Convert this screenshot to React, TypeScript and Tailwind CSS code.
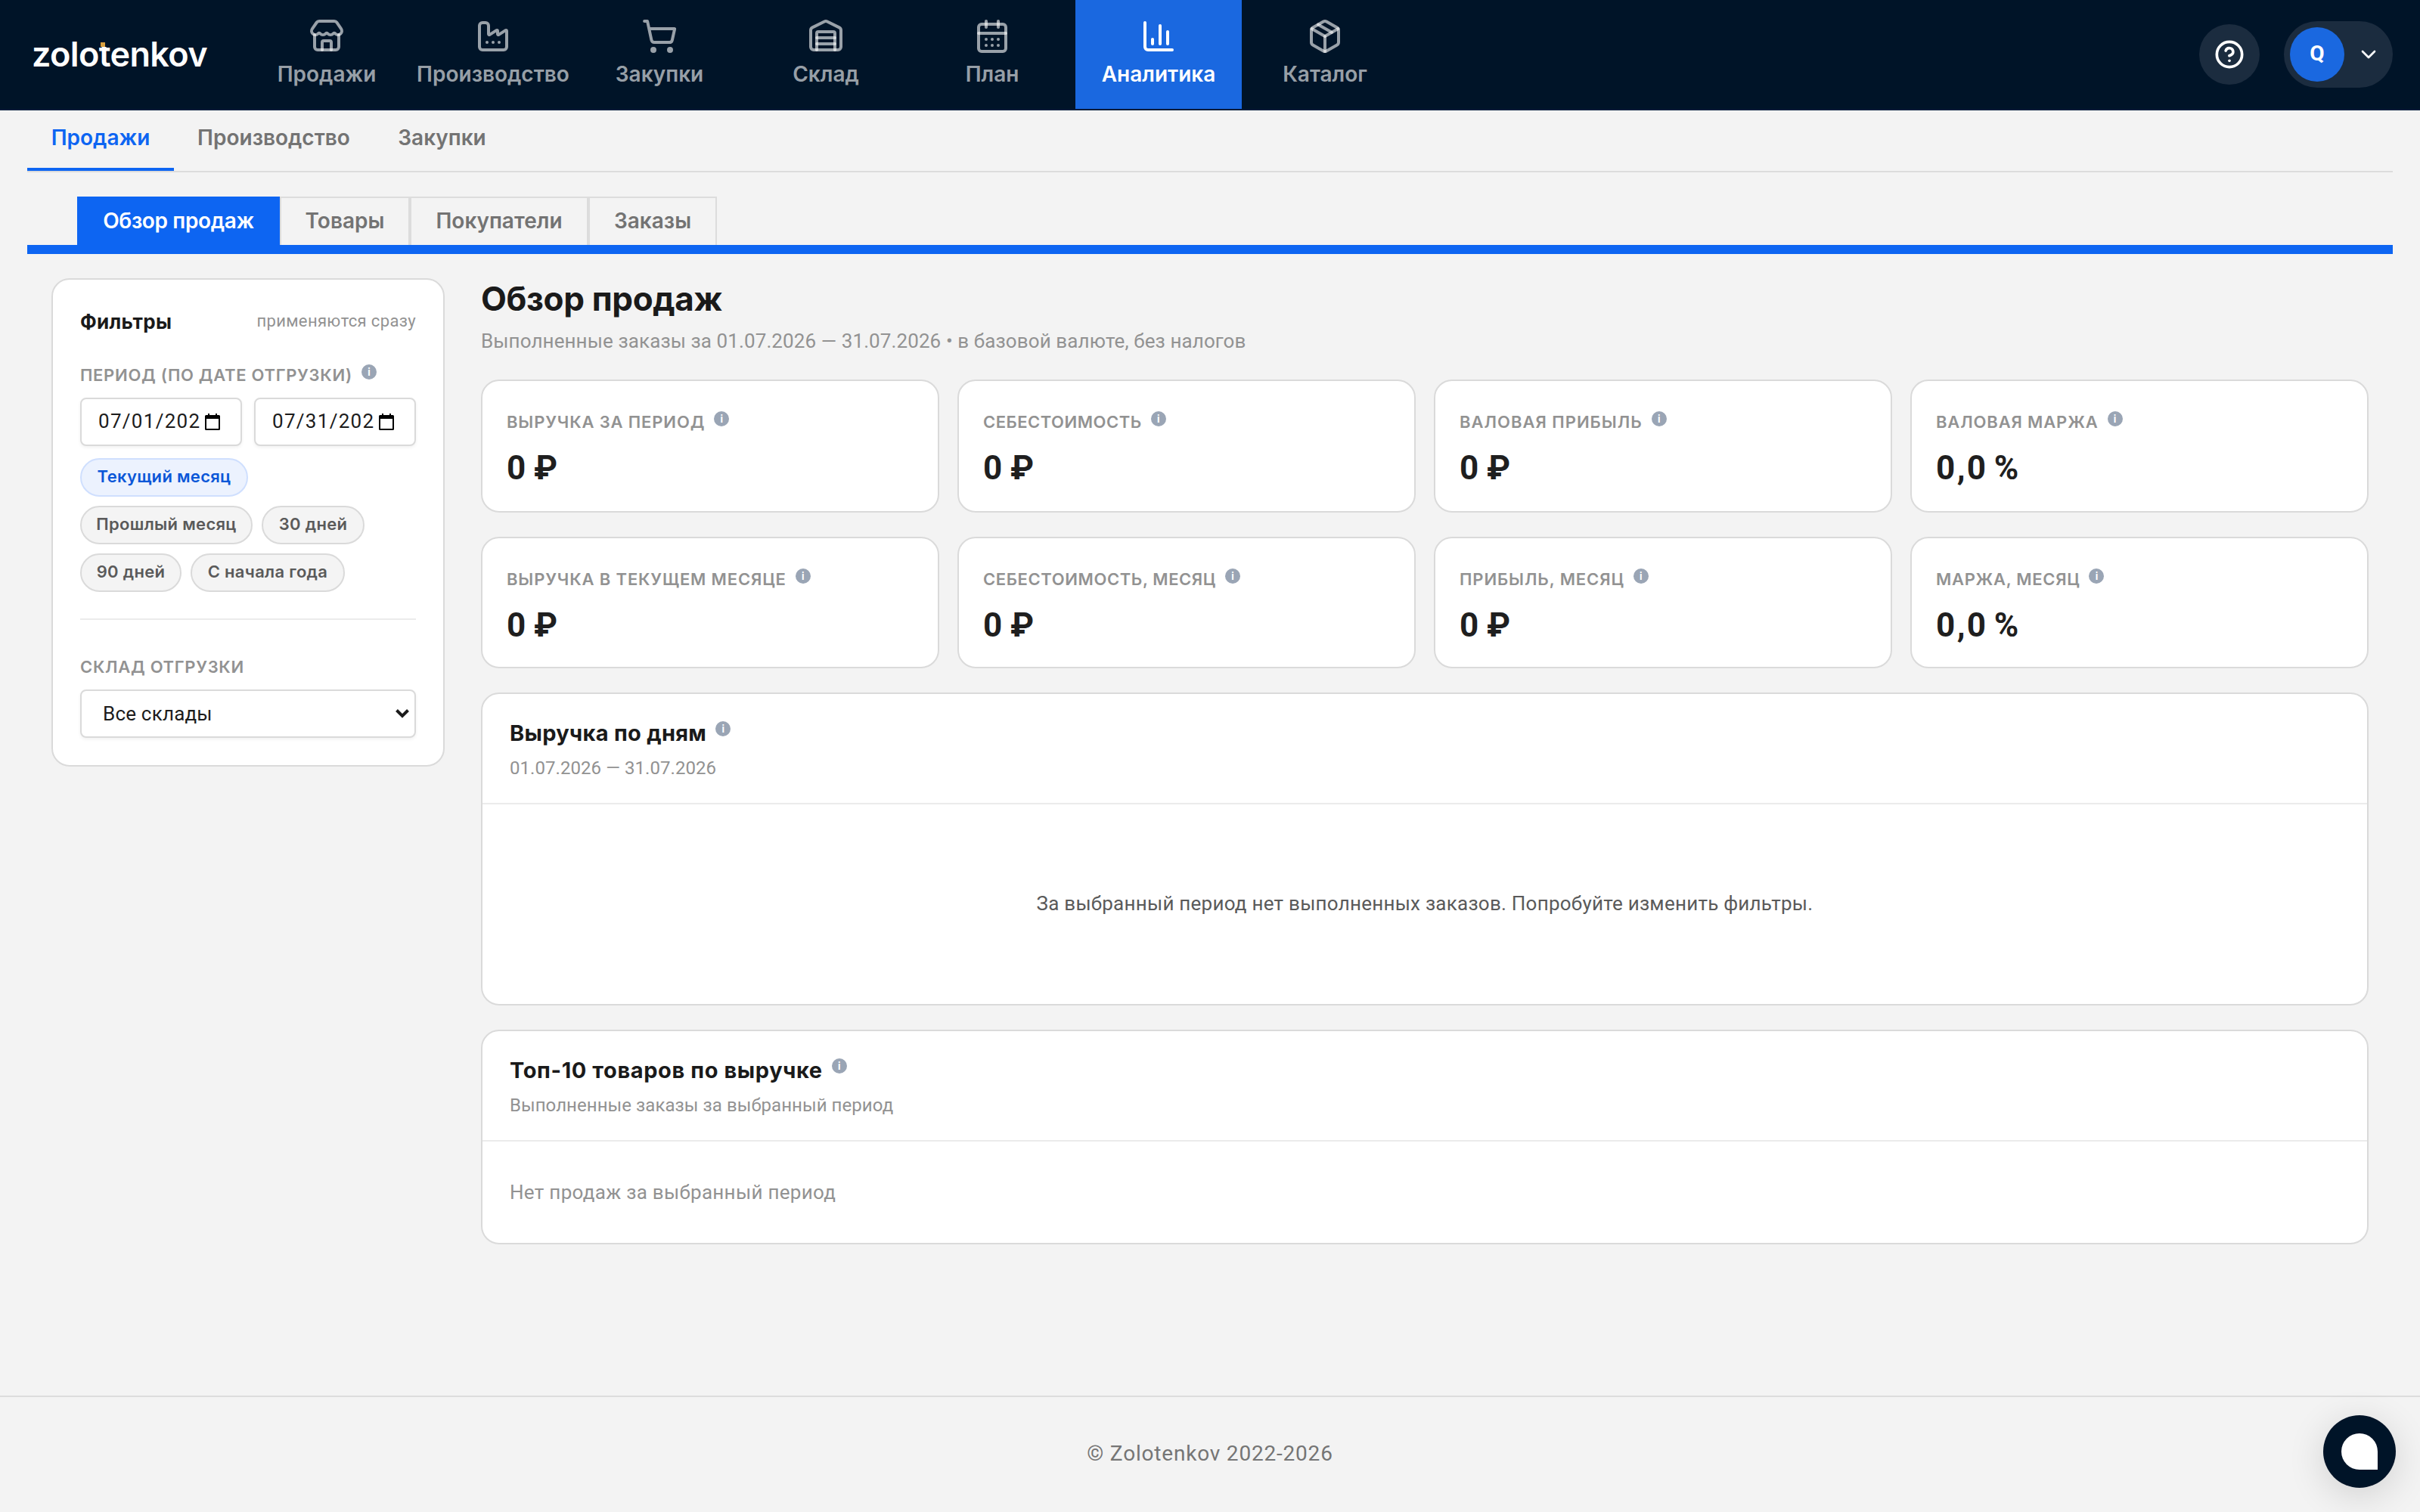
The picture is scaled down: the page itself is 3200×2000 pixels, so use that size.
import type { FC, ReactNode } from "react";
import {
  CalendarDays,
  ChartColumn,
  ChevronDown,
  CircleQuestionMark,
  Factory,
  Package,
  ShoppingCart,
  Store,
  Warehouse,
} from "lucide-react";
import type { LucideIcon } from "lucide-react";

type NavItem = { label: string; icon: LucideIcon; active?: boolean };

const navItems: NavItem[] = [
  { label: "Продажи", icon: Store },
  { label: "Производство", icon: Factory },
  { label: "Закупки", icon: ShoppingCart },
  { label: "Склад", icon: Warehouse },
  { label: "План", icon: CalendarDays },
  { label: "Аналитика", icon: ChartColumn, active: true },
  { label: "Каталог", icon: Package },
];

const sections = [
  { label: "Продажи", width: "w-[194px]" },
  { label: "Производство", width: "w-[264px]" },
  { label: "Закупки", width: "w-[181px]" },
];

const reports = [
  { label: "Обзор продаж", width: "w-[268px]" },
  { label: "Товары", width: "w-[172px]" },
  { label: "Покупатели", width: "w-[236px]" },
  { label: "Заказы", width: "w-[170px]" },
];

const presets = [
  { label: "Текущий месяц", width: "w-[222px]" },
  { label: "Прошлый месяц", width: "w-[228px]" },
  { label: "30 дней", width: "w-[136px]" },
  { label: "90 дней", width: "w-[134px]" },
  { label: "С начала года", width: "w-[204px]" },
];

const metrics = [
  { label: "Выручка за период", value: "0 ₽", tracking: "tracking-[0.85px]" },
  { label: "Себестоимость", value: "0 ₽", tracking: "tracking-[0.5px]" },
  { label: "Валовая прибыль", value: "0 ₽", tracking: "tracking-[1px]" },
  { label: "Валовая маржа", value: "0,0 %", tracking: "tracking-[0.85px]" },
  { label: "Выручка в текущем месяце", value: "0 ₽", tracking: "tracking-[0.85px]" },
  { label: "Себестоимость, месяц", value: "0 ₽", tracking: "tracking-[0.6px]" },
  { label: "Прибыль, месяц", value: "0 ₽", tracking: "tracking-[0.9px]" },
  { label: "Маржа, месяц", value: "0,0 %", tracking: "tracking-[0.7px]" },
];

const InfoDot: FC = () => (
  <span className="mb-2 flex h-5 w-5 shrink-0 items-center justify-center rounded-full bg-[#9aa5b5] text-[13px] leading-none font-bold tracking-normal text-white normal-case">
    i
  </span>
);

const FieldLabel: FC<{ children: ReactNode; info?: boolean }> = ({ children, info }) => (
  <div className="flex h-[26px] items-center gap-3 text-[22px] font-[560] tracking-[0.7px] whitespace-nowrap text-[#929292] uppercase">
    <span>{children}</span>
    {info && <InfoDot />}
  </div>
);

const DateField: FC<{ value: string }> = ({ value }) => (
  <div className="flex h-16 w-[214px] items-center rounded-lg border-2 border-[#dadada] bg-white pl-[22px] shadow-[0_2px_4px_rgba(0,0,0,0.06)]">
    <span className="w-[136px] pb-0.5 font-['Roboto',sans-serif] text-[26px] tracking-[1.3px] whitespace-nowrap text-[#1c1c1c]">
      {value}
    </span>
    <svg width="20" height="22" viewBox="0 0 20 22" className="ml-[5px]">
      <path
        d="M4 0h2v2h8V0h2v2h2.500a1.500 1.500 0 0 1 1.500 1.500v17a1.500 1.500 0 0 1-1.500 1.500h-17A1.500 1.500 0 0 1 0 20.500v-17A1.500 1.500 0 0 1 1.500 2H4zM2 7v13h16V7z"
        fill="#000"
        fillRule="evenodd"
      />
    </svg>
  </div>
);

const Header: FC = () => (
  <header className="flex h-[146px] shrink-0 items-start border-b-2 border-[#001a38] bg-[#001428]">
    {/* Wordmark with the gold tip over the "t" */}
    <div className="relative h-36 w-[322px] shrink-0 pl-[42px]">
      <span className="block pt-[42px] text-[45px] leading-[60px] font-semibold tracking-[-0.65px] text-white">
        zolotenkov
      </span>
      <i className="absolute top-[54px] left-[130px] h-2 w-4 bg-[#001428]" />
      <i className="absolute top-14 left-[133px] h-1.5 w-1.5 bg-[#dba140]" />
    </div>

    <nav className="flex h-36">
      {navItems.map(({ label, icon: Icon, active }) => (
        <a
          key={label}
          className={`flex w-[220px] flex-col items-center pt-6 ${
            active ? "bg-[#1a68e0] text-white" : "text-white/60"
          }`}
        >
          <Icon size={48} strokeWidth={2} />
          <span className="mt-3 text-[28px] leading-7 font-[570]">{label}</span>
        </a>
      ))}
    </nav>

    <div className="ml-auto flex h-36 items-center gap-8 pr-9">
      <div className="flex h-20 w-20 items-center justify-center rounded-full bg-[#1b2c3f] text-white">
        <CircleQuestionMark size={40} strokeWidth={2.2} />
      </div>
      <div className="flex h-[88px] items-center gap-4 rounded-full bg-[#1b2c3f] pr-4 pl-2 text-white">
        <div className="flex h-[72px] w-[72px] items-center justify-center rounded-full bg-[#1a68e0] pb-0.5 font-['Roboto',sans-serif] text-[28px] leading-none font-bold">
          Q
        </div>
        <ChevronDown size={32} />
      </div>
    </div>
  </header>
);

const Filters: FC = () => (
  <aside className="w-[520px] shrink-0 self-start rounded-3xl border-2 border-[#dadada] bg-white px-9 pt-[35px] pb-9">
    <div className="flex h-10 items-center justify-between">
      <h2 className="text-[26px] font-[670] tracking-[0.3px] text-[#1a1a1a]">Фильтры</h2>
      <span className="pb-0.5 font-['Roboto',sans-serif] text-[22px] tracking-[0.35px] text-[#929292]">
        применяются сразу
      </span>
    </div>

    <div className="mt-[38px]">
      <FieldLabel info>Период (по дате отгрузки)</FieldLabel>
    </div>
    <div className="mt-[17px] flex gap-4">
      <DateField value="07/01/202" />
      <DateField value="07/31/202" />
    </div>

    <div className="mt-4 flex flex-wrap gap-3">
      {presets.map(({ label, width }, index) => (
        <span
          key={label}
          className={`flex h-[51px] items-center justify-center rounded-full border-2 pb-[3px] text-[22px] font-[570] tracking-[0.3px] whitespace-nowrap ${width} ${
            index === 0
              ? "border-[#cfdffe] bg-[#ecf2fe] text-[#0b57d8]"
              : "border-[#dadada] bg-[#f4f4f4] text-[#5a5a5a]"
          }`}
        >
          {label}
        </span>
      ))}
    </div>

    <div className="mt-[35px] h-0.5 bg-[#ebebeb]" />

    <div className="mt-[49px]">
      <FieldLabel>Склад отгрузки</FieldLabel>
    </div>
    <div className="mt-[17px] flex h-16 items-center justify-between rounded-lg border-2 border-[#dadada] bg-white pr-[7px] pl-[28px] shadow-[0_2px_4px_rgba(0,0,0,0.06)]">
      <span className="pt-px font-['Roboto',sans-serif] text-[26px] tracking-[0.2px] text-[#1c1c1c]">Все склады</span>
      <svg width="18" height="14" viewBox="0 0 18 14" fill="none" stroke="#1c1c1c" strokeWidth="4">
        <path d="M1.500 2.500 9 10l7.500-7.500" />
      </svg>
    </div>
  </aside>
);

type PanelProps = { title: ReactNode; subtitle: string; className: string; children: ReactNode };

const Panel: FC<PanelProps> = ({ title, subtitle, className, children }) => (
  <section className={`mt-8 flex flex-col rounded-3xl border-2 border-[#dadada] bg-white ${className}`}>
    <div className="h-[146px] shrink-0 border-b-2 border-[#ebebeb] px-9 pt-8">
      <div className="flex h-10 items-center gap-3 pb-1">
        <h3 className="pt-1 text-[29px] font-[660] tracking-[0.3px] text-[#1a1a1a]">{title}</h3>
        <InfoDot />
      </div>
      <p className="mt-2.5 font-['Roboto',sans-serif] text-2xl leading-8 tracking-[0.06px] text-[#929292]">{subtitle}</p>
    </div>
    {children}
  </section>
);

export default function App() {
  return (
    <div className="relative flex h-[2000px] w-[3200px] flex-col bg-[#f3f3f3] font-['Inter','Roboto',sans-serif]">
      <Header />

      <div className="flex grow flex-col px-9">
        {/* Section tabs */}
        <div className="flex h-[82px] border-b-2 border-[#dcdcdc]">
          {sections.map(({ label, width }, index) => (
            <a
              key={label}
              className={`h-20 pt-4 text-center text-[28px] leading-10 font-[570] ${width} ${
                index === 0 ? "border-b-4 border-[#0d65f2] text-[#0d65f2]" : "text-[#737373]"
              }`}
            >
              {label}
            </a>
          ))}
        </div>

        {/* Report tabs */}
        <div className="mt-8 flex h-[76px] border-b-[12px] border-[#0d65f2] pl-[66px]">
          {reports.map(({ label, width }, index) => (
            <a
              key={label}
              className={`flex h-16 items-center justify-center text-[28px] font-[570] ${width} ${
                index === 0
                  ? "bg-[#0d65f2] tracking-[-0.35px] text-white"
                  : "border-x-2 border-t-2 border-[#dcdcdc] pb-0.5 text-[#737373]"
              }`}
            >
              {label}
            </a>
          ))}
        </div>

        <div className="mt-8 flex gap-12 px-8">
          <Filters />

          <main className="grow">
            <h1 className="pt-px text-[44px] leading-[52px] font-[650] tracking-[-0.35px] text-[#1a1a1a]">Обзор продаж</h1>
            <p className="mt-3.5 font-['Roboto',sans-serif] text-[26px] leading-8 tracking-[0.1px] text-[#929292]">
              Выполненные заказы за 01.07.2026 — 31.07.2026 • в базовой валюте, без налогов
            </p>

            <div className="mt-[35px] grid grid-cols-4 grid-rows-[176px_174px] gap-x-6 gap-y-8">
              {metrics.map(({ label, value, tracking }) => (
                <div key={label} className="rounded-3xl border-2 border-[#dadada] bg-white px-8 pt-10">
                  <div className={`flex h-7 items-center gap-3 text-[22px] font-[560] text-[#929292] uppercase ${tracking}`}>
                    <span>{label}</span>
                    <InfoDot />
                  </div>
                  <div className="mt-[21px] font-['Roboto',sans-serif] text-[44px] leading-[52px] font-bold tracking-[2.4px] text-[#1f1f1f] [word-spacing:-5px]">
                    {value}
                  </div>
                </div>
              ))}
            </div>

            <Panel title="Выручка по дням" subtitle="01.07.2026 — 31.07.2026" className="h-[414px]">
              <p className="flex grow items-center justify-center pb-0.5 font-['Roboto',sans-serif] text-[26px] tracking-[0.24px] text-[#5a5a5a]">
                За выбранный период нет выполненных заказов. Попробуйте изменить фильтры.
              </p>
            </Panel>

            <Panel
              title={<span className="tracking-[0.6px]">Топ-10 товаров по выручке</span>}
              subtitle="Выполненные заказы за выбранный период"
              className="h-[284px]"
            >
              <p className="flex grow items-center px-9 font-['Roboto',sans-serif] text-[26px] tracking-[0.3px] text-[#929292]">
                Нет продаж за выбранный период
              </p>
            </Panel>
          </main>
        </div>
      </div>

      <footer className="flex h-[154px] shrink-0 items-center justify-center border-t-2 border-[#dcdcdc] pb-0.5 font-['Roboto',sans-serif] text-[28px] tracking-[0.8px] text-[#757575]">
        © Zolotenkov 2022-2026
      </footer>

      {/* Chat launcher */}
      <div className="absolute right-8 bottom-8 flex h-24 w-24 items-center justify-center rounded-full bg-[#001428] shadow-[0_10px_50px_rgba(0,0,0,0.14)]">
        <div className="h-12 w-12 rounded-full rounded-br-none bg-white" />
      </div>
    </div>
  );
}
